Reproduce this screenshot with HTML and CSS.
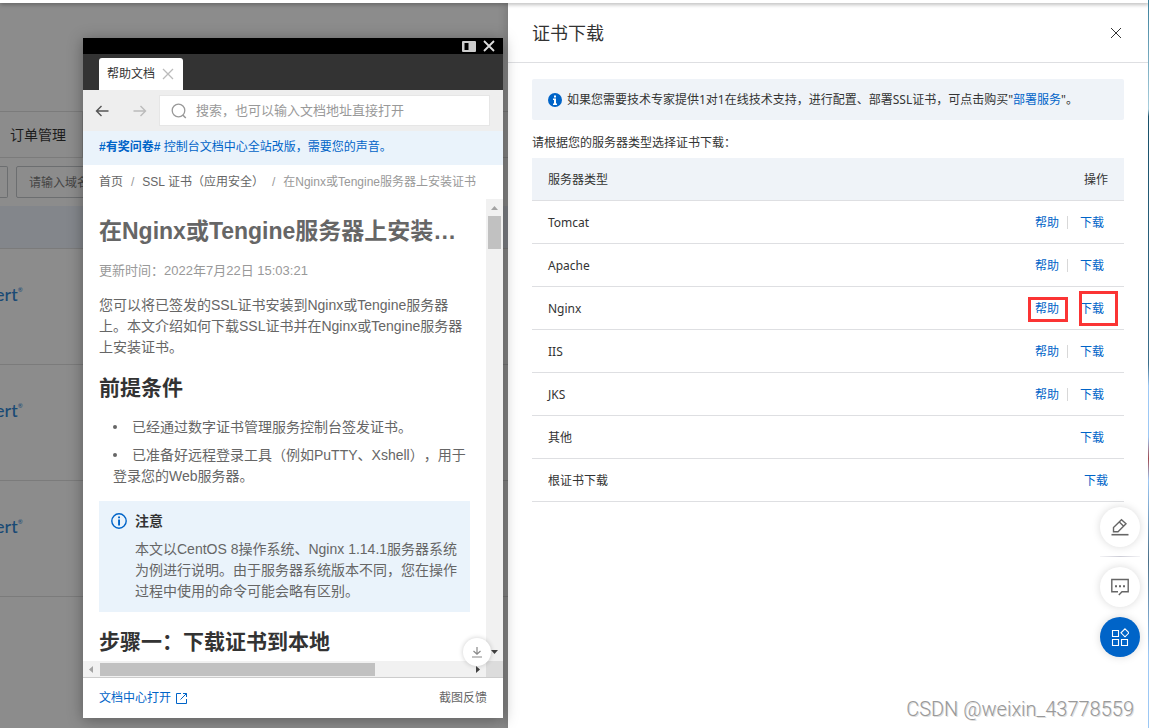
FILE: index.html
```
<!DOCTYPE html>
<html lang="zh-CN">
<head>
<meta charset="utf-8">
<title>证书下载</title>
<link rel="stylesheet" href="styles.css">
</head>
<body>
<main class="page">
  <div class="tabs"><a class="tab" href="#">订单管理</a></div>
  <div class="filters">
    <input class="filter filter-cut" type="text" aria-label="筛选">
    <input class="filter filter-domain" type="text" aria-label="域名" placeholder="请输入域名">
  </div>
  <div class="list-head"></div>
  <div class="list-row"><span class="brand">ert<sup>®</sup></span></div>
  <div class="list-row"><span class="brand">ert<sup>®</sup></span></div>
  <div class="list-row"><span class="brand">ert<sup>®</sup></span></div>
</main>

<aside class="drawer">
  <header class="drawer-head">
    <h1>证书下载</h1>
    <button class="icon-btn" type="button" aria-label="关闭">
      <svg width="12" height="12" viewBox="0 0 12 12"><path d="M1 1l10 10M11 1L1 11" stroke="#333" stroke-width="1" fill="none"/></svg>
    </button>
  </header>
  <div class="drawer-body">
    <div class="notice">
      <svg width="14" height="14" viewBox="0 0 14 14"><circle cx="7" cy="7" r="7" fill="#0064c8"/><path d="M6 2.500h2v2H6zM5 5.500h3v5h1V12H5v-1.500h1V7H5z" fill="#fff"/></svg>
      <p>如果您需要技术专家提供1对1在线技术支持，进行配置、部署SSL证书，可点击购买"<a href="#">部署服务</a>"。</p>
    </div>
    <p class="hint">请根据您的服务器类型选择证书下载<span class="colon">：</span></p>
    <table class="servers">
      <thead><tr><th>服务器类型</th><th class="ops">操作</th></tr></thead>
      <tbody>
        <tr><td>Tomcat</td><td class="ops"><span class="links"><a href="#">帮助</a><i></i><a href="#">下载</a></span></td></tr>
        <tr><td>Apache</td><td class="ops"><span class="links"><a href="#">帮助</a><i></i><a href="#">下载</a></span></td></tr>
        <tr><td>Nginx</td><td class="ops"><span class="links"><a class="marked mark-help" href="#">帮助</a><i class="blank"></i><a class="marked mark-download" href="#">下载</a></span></td></tr>
        <tr><td>IIS</td><td class="ops"><span class="links"><a href="#">帮助</a><i></i><a href="#">下载</a></span></td></tr>
        <tr><td>JKS</td><td class="ops"><span class="links"><a href="#">帮助</a><i></i><a href="#">下载</a></span></td></tr>
        <tr><td>其他</td><td class="ops"><span class="links"><a href="#">下载</a></span></td></tr>
        <tr><td>根证书下载</td><td class="ops"><a href="#">下载</a></td></tr>
      </tbody>
    </table>
  </div>
</aside>

<section class="help">
  <div class="help-bar">
    <button type="button" aria-label="停靠"><svg width="14" height="11" viewBox="0 0 14 11"><rect width="14" height="11" rx="1" fill="#ccc"/><rect x="2.500" y="2" width="4" height="7" fill="#000"/></svg></button>
    <button type="button" aria-label="关闭窗口"><svg width="12" height="12" viewBox="0 0 12 12"><path d="M1 1l10 10M11 1L1 11" stroke="#ddd" stroke-width="1.800" fill="none"/></svg></button>
  </div>
  <div class="help-tabs">
    <div class="help-tab"><span>帮助文档</span>
      <button type="button" aria-label="关闭标签"><svg width="12" height="12" viewBox="0 0 12 12"><path d="M1 1l10 10M11 1L1 11" stroke="#bbb" stroke-width="1.300" fill="none"/></svg></button>
    </div>
  </div>
  <div class="toolbar">
    <button type="button" aria-label="后退"><svg width="14" height="12" viewBox="0 0 14 12"><path d="M13.500 6H1.500M6.500 1l-5 5 5 5" stroke="#555" stroke-width="1.400" fill="none"/></svg></button>
    <button type="button" aria-label="前进"><svg width="14" height="12" viewBox="0 0 14 12"><path d="M.5 6h12M7.500 1l5 5-5 5" stroke="#bbb" stroke-width="1.400" fill="none"/></svg></button>
    <label class="search">
      <svg width="16" height="16" viewBox="0 0 16 16"><circle cx="7.500" cy="7.500" r="6.300" stroke="#999" stroke-width="1.300" fill="none"/><path d="M11.800 12l3 3" stroke="#999" stroke-width="1.500"/></svg>
      <input type="text" aria-label="搜索" placeholder="搜索，也可以输入文档地址直接打开">
    </label>
  </div>
  <a class="survey" href="#"><b>#有奖问卷#</b> 控制台文档中心全站改版，需要您的声音。</a>
  <nav class="crumbs"><a href="#">首页</a><span>/</span><a href="#">SSL 证书（应用安全）</a><span>/</span><em>在Nginx或Tengine服务器上安装证书</em></nav>
  <div class="viewer">
    <article class="doc">
      <h2 class="doc-title">在Nginx或Tengine服务器上安装…</h2>
      <p class="date">更新时间<span class="colon">：</span>2022年7月22日 15:03:21</p>
      <p>您可以将已签发的SSL证书安装到Nginx或Tengine服务器<br>上。本文介绍如何下载SSL证书并在Nginx或Tengine服务器<br>上安装证书。</p>
      <h3>前提条件</h3>
      <ul>
        <li>已经通过数字证书管理服务控制台签发证书。</li>
        <li>已准备好远程登录工具（例如PuTTY、Xshell），用于<br>登录您的Web服务器。</li>
      </ul>
      <div class="note">
        <svg width="16" height="16" viewBox="0 0 16 16"><circle cx="8" cy="8" r="7.200" fill="none" stroke="#0064c8" stroke-width="1.400"/><path d="M7.100 3.500h1.900v1.800H7.100zM7.100 6.500h1.900v6H7.100z" fill="#0064c8"/></svg>
        <div><strong>注意</strong>
        <p>本文以CentOS 8操作系统、Nginx 1.14.1服务器系统<br>为例进行说明。由于服务器系统版本不同，您在操作<br>过程中使用的命令可能会略有区别。</p></div>
      </div>
      <h3 class="step">步骤一<span class="colon">：</span>下载证书到本地</h3>
    </article>
    <div class="vbar">
      <svg width="7" height="4" viewBox="0 0 7 4"><path d="M0 4L3.500 0 7 4z" fill="#a3a3a3"/></svg>
      <div class="vthumb"></div>
      <svg class="down" width="7" height="4" viewBox="0 0 7 4"><path d="M0 0L3.500 4 7 0z" fill="#404040"/></svg>
    </div>
    <div class="hbar">
      <svg width="4" height="7" viewBox="0 0 4 7"><path d="M4 0L0 3.500 4 7z" fill="#a3a3a3"/></svg>
      <div class="hthumb"></div>
      <svg class="right" width="4" height="7" viewBox="0 0 4 7"><path d="M0 0L4 3.500 0 7z" fill="#404040"/></svg>
    </div>
    <div class="corner"></div>
    <button class="to-bottom" type="button" aria-label="到底部"><svg width="12" height="12" viewBox="0 0 12 12"><path d="M6 1v7M2.500 5L6 8.300 9.500 5M1 11h10" stroke="#888" stroke-width="1.200" fill="none"/></svg></button>
  </div>
  <footer class="help-foot">
    <a href="#">文档中心打开 <svg width="11" height="11" viewBox="0 0 11 11"><path d="M5 .5H.5v10h10V6M7 .5h3.500V4M10.500.5L4.500 6.500" stroke="#0064c8" fill="none"/></svg></a>
    <button type="button">截图反馈</button>
  </footer>
</section>

<div class="fabs">
  <button class="fab" type="button" aria-label="编辑"><svg width="18" height="18" viewBox="0 0 18 18"><path d="M2.500 13.800V9.600L10.500 1.700l4.500 4-8 8.100zM8.300 4l4.400 4.200" fill="none" stroke="#666" stroke-width="1.400"/><path d="M.5 16.700h17" stroke="#666" stroke-width="1.600"/></svg></button>
  <hr>
  <button class="fab" type="button" aria-label="消息"><svg width="18" height="18" viewBox="0 0 18 18"><path d="M7 13.800H.8V1.500h16.400v12.300H11L7.800 17" fill="none" stroke="#666" stroke-width="1.400"/><path d="M4 7.200h2v2H4zM8 7.200h2v2H8zM12 7.200h2v2h-2z" fill="#666"/></svg></button>
  <button class="fab fab-main" type="button" aria-label="应用"><svg width="18" height="18" viewBox="0 0 18 18"><path d="M1.500 2.500h6v6h-6zM1.500 11.500h6v6h-6zM10.500 11.500h6v6h-6zM14 .8l4 4-4 4-4-4z" fill="none" stroke="#fff" stroke-width="1.100"/></svg></button>
</div>
<div class="watermark">CSDN @weixin_43778559</div>
<div class="top-strip"></div>
<div class="edge"></div>
</body>
</html>
```
FILE: styles.css
```
* { box-sizing: border-box; }
body {
  margin: 0;
  height: 100vh;
  overflow: hidden;
  position: relative;
  background: #8c8c8c;
  color: #333;
  font: 12px/18px "Noto Sans", "Noto Sans CJK SC", sans-serif;
  text-spacing-trim: space-all;
}
h1, h2, h3, p, ul { margin: 0; padding: 0; }
a { color: #0064c8; text-decoration: none; }
button { border: 0; padding: 0; background: none; font: inherit; color: inherit; display: flex; align-items: center; justify-content: center; }
svg { display: block; flex: none; }
input { font: inherit; min-width: 0; }
.colon { font-family: "Noto Sans CJK TC", sans-serif; line-height: 1; }

.top-strip { position: absolute; top: 0; left: 0; right: 0; height: 3px; background: #fff; box-shadow: 0 1px 4px rgba(0,0,0,.4); }
.edge { position: absolute; top: 0; right: 0; bottom: 0; width: 1px; background: linear-gradient(#3a7f9c 0, #a9cfdd 15%, #17506a 16%, #3c6f8c 50%, #9cc8f5 53%, #9cc8f5 60%, #a04a50 63%, #9cc8f5 66%, #4b7089 77%, #9cc8f5 90%); }

.page { padding-top: 111px; width: 508px; }
.tabs { display: flex; border-top: 1px solid #7b7b7b; border-bottom: 1px solid #7b7b7b; height: 47px; }
.tab { width: 83px; padding-left: 10px; border-right: 1px solid #7b7b7b; color: #1c1c1c; font-size: 14px; line-height: 45px; }
.filters { display: flex; gap: 8px; padding: 8px 0; }
.filter { height: 32px; border: 1px solid #6c6e70; border-radius: 2px; background: transparent; }
.filter-cut { width: 8px; border-left: 0; padding: 0; border-radius: 0 2px 2px 0; }
.filter-domain { width: 200px; padding: 0 12px; }
.filter::placeholder { color: #444; }
.list-head { height: 43px; background: #83868b; border-bottom: 1px solid #7b7b7b; }
.list-row { height: 116px; border-bottom: 1px solid #7b7b7b; padding-top: 31px; }
.brand { display: flex; color: #1a4a75; font-family: Lato, sans-serif; font-size: 18px; font-weight: 500; line-height: 28px; margin-left: -5px; }
.brand sup { font-size: 6px; line-height: 20px; }

.drawer { position: absolute; top: 3px; right: 1px; bottom: 0; width: 640px; background: #fff; box-shadow: 0 0 10px rgba(0,0,0,.2); }
.drawer-head { display: flex; align-items: center; justify-content: space-between; height: 60px; padding: 0 26px 0 24px; border-bottom: 1px solid #dedfe2; }
.drawer-head h1 { font-size: 18px; font-weight: 400; line-height: 28px; }
.drawer-body { padding: 16px 24px; }
.notice { display: flex; align-items: center; gap: 5px; height: 41px; padding: 0 16px; background: #eff3f8; border-radius: 2px; }
.hint { margin: 14px 0 6px; }
.servers { width: 100%; border-collapse: separate; border-spacing: 0; }
.servers th, .servers td { height: 43px; padding: 1px 16px 0; text-align: left; font-weight: 400; border-bottom: 1px solid #dedfe2; }
.servers th { background: #eff3f8; }
.servers .ops { text-align: right; }
.links { display: inline-flex; align-items: center; padding-right: 4px; }
.links i { width: 1px; height: 13px; margin: 0 12px 0 8px; background: #d8d8d8; }
.links .blank { background: none; }
.marked { position: relative; }
.marked::after { content: ""; position: absolute; border: 3px solid #fb3434; }
.mark-help::after { inset: -3px -9px -4px -7px; }
.mark-download::after { inset: -9px -14px -8px -1px; }

.help { position: absolute; top: 38px; left: 83px; width: 420px; height: 680px; display: flex; flex-direction: column; background: #fff; box-shadow: 0 2px 14px rgba(0,0,0,.35); font-family: "Liberation Sans", "Noto Sans CJK SC", sans-serif; color: #666; }
.help-bar { display: flex; justify-content: flex-end; align-items: center; gap: 7px; height: 16px; padding-right: 8px; background: #000; }
.help-tabs { display: flex; align-items: flex-end; height: 36px; padding-left: 16px; background: #333; }
.help-tab { display: flex; align-items: center; gap: 7px; height: 32px; padding: 0 9px 0 8px; background: #fff; border-radius: 3px 3px 0 0; color: #333; }
.toolbar { display: flex; align-items: center; height: 41px; padding: 0 13px 0 12px; background: #eee; gap: 24px; }
.search { display: flex; align-items: center; flex: 1; gap: 9px; height: 31px; margin-left: -12px; padding-left: 11px; background: #fff; border: 1px solid #e6e6e6; }
.search input { flex: 1; border: 0; padding: 0; font-size: 13px; }
.search input::placeholder { color: #999; }
.survey { height: 34px; padding-left: 16px; line-height: 33px; background: #eaf3fb; }
.crumbs { display: flex; gap: 8px; height: 34px; padding-left: 16px; line-height: 34px; white-space: nowrap; }
.crumbs a { color: #666; }
.crumbs span, .crumbs em { color: #999; font-style: normal; }
.viewer { position: relative; flex: 1; min-height: 0; display: grid; grid-template: minmax(0, 1fr) 16px / minmax(0, 1fr) 17px; }
.doc { overflow: hidden; padding: 15px 16px 0; font-size: 14px; line-height: 21px; white-space: nowrap; }
.doc-title { font-size: 23px; line-height: 34px; }
.date { margin: 12px 0 14px; color: #999; font-size: 13px; }
.doc h3 { font-size: 21px; line-height: 30px; color: #333; margin: 15px 0 14px; }
.doc ul { list-style: none; padding-left: 14px; }
.doc li { margin-bottom: 7px; }
.doc li::before { content: ""; display: inline-block; width: 4px; height: 4px; margin: 0 15px 3px 0; background: #666; border-radius: 50%; }
.note { display: flex; gap: 8px; margin-top: 14px; padding: 10px 12px; background: #eaf3fb; }
.note > svg { margin-top: 2px; }
.note strong { color: #333; }
.note p { margin-top: 7px; }
.vbar { display: flex; flex-direction: column; align-items: center; padding: 7px 2px 7px; background: #f1f1f1; }
.vthumb { width: 13px; height: 33px; margin: 6px 0 auto; background: #c1c1c1; }
.hbar { display: flex; align-items: center; padding: 0 6px; background: #f1f1f1; }
.hthumb { width: 275px; height: 13px; margin: 0 auto 0 7px; background: #c1c1c1; }
.corner { background: #dcdcdc; }
.to-bottom { position: absolute; right: 12px; bottom: 11px; width: 28px; height: 28px; border-radius: 50%; background: #fff; box-shadow: 0 0 5px rgba(0,0,0,.2); }
.help-foot { display: flex; align-items: center; justify-content: space-between; height: 41px; padding: 0 16px; border-top: 1px solid #ccc; }
.help-foot a { display: flex; align-items: center; gap: 5px; }

.fabs { position: absolute; right: 9px; bottom: 71px; width: 40px; display: flex; flex-direction: column; gap: 10px; }
.fab { width: 40px; height: 40px; border-radius: 50%; background: #fff; box-shadow: 0 0 8px rgba(0,0,0,.15); }
.fab-main { background: #0064c8; }
.fabs hr { width: 100%; height: 1px; margin: -1px 0 0; border: 0; background: linear-gradient(90deg, #f4f4f6, #ccccd6, #f4f4f6); }
.watermark { position: absolute; right: 15px; bottom: 7px; color: #999; font: 20px/24px Roboto, sans-serif; font-weight: 300; text-shadow: 1px 1px 0 #ddd; }
```
